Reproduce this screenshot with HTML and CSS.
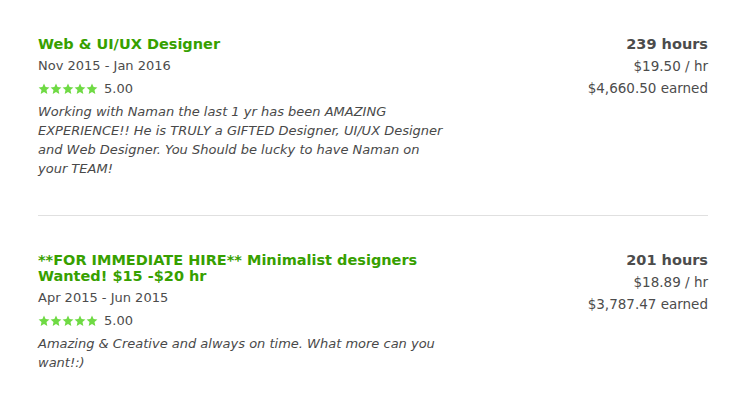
FILE: index.html
```html
<!DOCTYPE html>
<html lang="en">
<head>
    <meta charset="UTF-8">
    <meta name="viewport" content="width=device-width, initial-scale=1.0">
    <title>Work history</title>
    <link rel="stylesheet" href="styles.css">
</head>
<body>
    <div class="history">
        <div class="job">
            <div class="job-main">
                <h4 class="job-title">Web &amp; UI/UX Designer</h4>
                <div class="job-dates">Nov 2015 - Jan 2016</div>
                <div class="job-rating">
                    <span class="stars">
                        <svg viewBox="0 0 12 12"><path d="M6 .6l1.6 3.5 3.8.4-2.9 2.6.8 3.8L6 9 2.7 10.9l.8-3.8L.6 4.5l3.8-.4z"/></svg>
                        <svg viewBox="0 0 12 12"><path d="M6 .6l1.6 3.5 3.8.4-2.9 2.6.8 3.8L6 9 2.7 10.9l.8-3.8L.6 4.5l3.8-.4z"/></svg>
                        <svg viewBox="0 0 12 12"><path d="M6 .6l1.6 3.5 3.8.4-2.9 2.6.8 3.8L6 9 2.7 10.9l.8-3.8L.6 4.5l3.8-.4z"/></svg>
                        <svg viewBox="0 0 12 12"><path d="M6 .6l1.6 3.5 3.8.4-2.9 2.6.8 3.8L6 9 2.7 10.9l.8-3.8L.6 4.5l3.8-.4z"/></svg>
                        <svg viewBox="0 0 12 12"><path d="M6 .6l1.6 3.5 3.8.4-2.9 2.6.8 3.8L6 9 2.7 10.9l.8-3.8L.6 4.5l3.8-.4z"/></svg>
                    </span>
                    <span class="score">5.00</span>
                </div>
                <p class="job-feedback">Working with Naman the last 1 yr has been AMAZING EXPERIENCE!! He is TRULY a GIFTED Designer, UI/UX Designer and Web Designer. You Should be lucky to have Naman on your TEAM!</p>
            </div>
            <div class="job-stats">
                <div class="hours">239 hours</div>
                <div>$19.50 / hr</div>
                <div>$4,660.50 earned</div>
            </div>
        </div>

        <div class="job">
            <div class="job-main">
                <h4 class="job-title">**FOR IMMEDIATE HIRE** Minimalist designers Wanted! $15 -$20 hr</h4>
                <div class="job-dates">Apr 2015 - Jun 2015</div>
                <div class="job-rating">
                    <span class="stars">
                        <svg viewBox="0 0 12 12"><path d="M6 .6l1.6 3.5 3.8.4-2.9 2.6.8 3.8L6 9 2.7 10.9l.8-3.8L.6 4.5l3.8-.4z"/></svg>
                        <svg viewBox="0 0 12 12"><path d="M6 .6l1.6 3.5 3.8.4-2.9 2.6.8 3.8L6 9 2.7 10.9l.8-3.8L.6 4.5l3.8-.4z"/></svg>
                        <svg viewBox="0 0 12 12"><path d="M6 .6l1.6 3.5 3.8.4-2.9 2.6.8 3.8L6 9 2.7 10.9l.8-3.8L.6 4.5l3.8-.4z"/></svg>
                        <svg viewBox="0 0 12 12"><path d="M6 .6l1.6 3.5 3.8.4-2.9 2.6.8 3.8L6 9 2.7 10.9l.8-3.8L.6 4.5l3.8-.4z"/></svg>
                        <svg viewBox="0 0 12 12"><path d="M6 .6l1.6 3.5 3.8.4-2.9 2.6.8 3.8L6 9 2.7 10.9l.8-3.8L.6 4.5l3.8-.4z"/></svg>
                    </span>
                    <span class="score">5.00</span>
                </div>
                <p class="job-feedback">Amazing &amp; Creative and always on time. What more can you want!:)</p>
            </div>
            <div class="job-stats">
                <div class="hours">201 hours</div>
                <div>$18.89 / hr</div>
                <div>$3,787.47 earned</div>
            </div>
        </div>
    </div>
</body>
</html>
```

FILE: styles.css
```css
* {
    margin: 0;
    padding: 0;
    box-sizing: border-box;
}

body {
    font-family: "DejaVu Sans", "Open Sans", sans-serif;
    background: #fff;
    color: #4c4c4c;
}

.history {
    padding: 0 41px 0 38px;
}

.job {
    display: flex;
    justify-content: space-between;
    padding: 36px 0 37px;
    border-bottom: 1px solid #e0e0e0;
}

.job:last-child {
    border-bottom: none;
}

.job-main {
    width: 412px;
}

.job-title {
    font-size: 14.5px;
    line-height: 16px;
    font-weight: 700;
    color: #37a000;
    margin-bottom: 5px;
}

.job-dates {
    font-size: 13px;
    line-height: 17px;
    margin-bottom: 6px;
}

.job-rating {
    display: flex;
    align-items: center;
    height: 17px;
    margin-bottom: 5px;
}

.stars {
    display: flex;
    margin-right: 6px;
}

.stars svg {
    width: 12px;
    height: 12px;
    fill: #6fda44;
}

.score {
    font-size: 13px;
}

.job-feedback {
    font-size: 13px;
    line-height: 19px;
    font-style: italic;
    color: #494949;
}

.job-stats {
    text-align: right;
    font-size: 13.5px;
    line-height: 22px;
}

.job-stats .hours {
    font-size: 14.5px;
    font-weight: 700;
    color: #4c4c4c;
    line-height: 16px;
    margin-bottom: 3px;
}
```
